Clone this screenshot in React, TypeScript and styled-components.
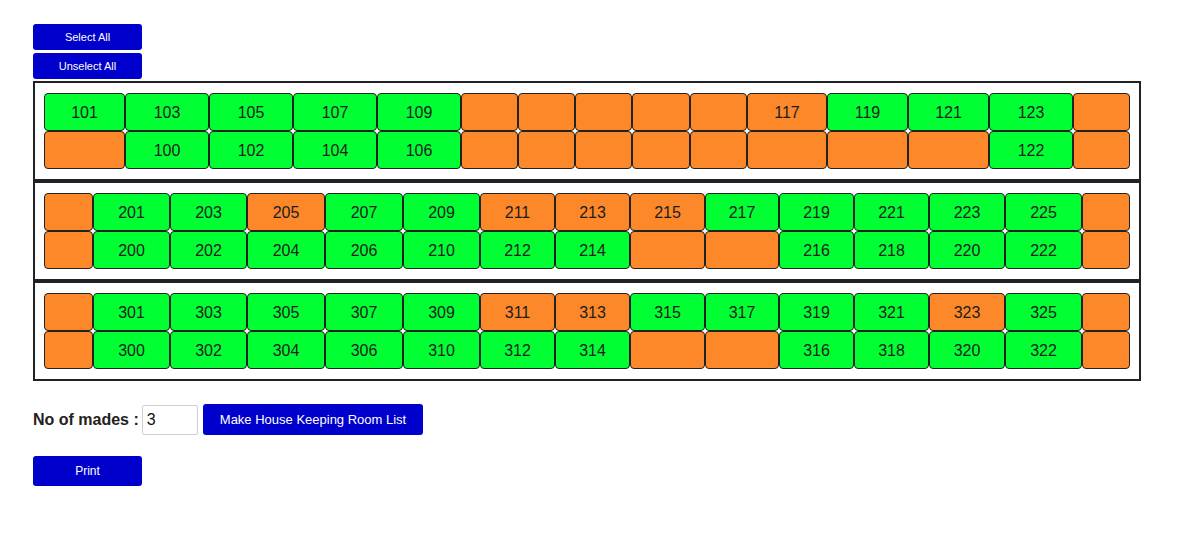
import styled, { createGlobalStyle } from 'styled-components';

const GlobalStyle = createGlobalStyle`
  body {
    margin: 8px;
    font-family: "Liberation Sans", Arial, Helvetica, sans-serif;
    color: #222;
    background: #fff;
  }
`;

const Page = styled.div`
  padding: 16px 25px;
  display: flex;
  flex-direction: column;
  align-items: flex-start;
`;

const BlueButton = styled.button<{ $wide?: boolean; $size?: number; $height?: number }>`
  width: ${(p) => (p.$wide ? 'auto' : '109px')};
  height: ${(p) => p.$height || 26}px;
  padding: ${(p) => (p.$wide ? '0 17px' : '0')};
  border: none;
  border-radius: 3px;
  background-color: #0000cd;
  color: #fff;
  font-family: "Liberation Sans", Arial, Helvetica, sans-serif;
  font-size: ${(p) => p.$size || 11}px;
  cursor: pointer;
`;

const TopButtons = styled.div`
  display: flex;
  flex-direction: column;
  gap: 3px;
  margin-bottom: 2px;
`;

const Hotel = styled.div`
  width: 1108px;
  display: flex;
  flex-direction: column;
`;

const Floor = styled.div`
  border: 2px solid #1f2226;
  padding: 10px 9px;
`;

const FloorGrid = styled.div<{ $cols: string }>`
  display: grid;
  grid-template-columns: ${(p) => p.$cols};
  grid-auto-rows: 38px;
`;

const Room = styled.div<{ $free: boolean }>`
  display: flex;
  align-items: center;
  justify-content: center;
  padding-top: 1px;
  border: 1px solid #222;
  border-radius: 4px;
  background-color: ${(p) => (p.$free ? '#00ff33' : '#fd8829')};
  font-size: 16px;
  color: #1c1c1c;
`;

const Controls = styled.div`
  display: flex;
  align-items: center;
  margin-top: 23px;
`;

const Label = styled.label`
  font-size: 16px;
  font-weight: bold;
  color: #222;
  margin-right: 3px;
`;

const MadesInput = styled.input`
  width: 56px;
  height: 30px;
  box-sizing: border-box;
  border: 1px solid #d0d0d0;
  border-radius: 2px;
  padding: 0 4px;
  font-family: "Liberation Sans", Arial, Helvetica, sans-serif;
  font-size: 16px;
  color: #111;
  margin-right: 5px;
`;

const PrintRow = styled.div`
  margin-top: 21px;
`;

type Cell = { no?: string; free: boolean };

const g = (no?: string): Cell => ({ no, free: true });
const o = (no?: string): Cell => ({ no, free: false });

const floors: { cols: number[]; rows: Cell[][] }[] = [
  {
    cols: [81, 84, 84, 84, 84, 57, 57, 57, 58, 57, 80, 81, 81, 84, 57],
    rows: [
      [g('101'), g('103'), g('105'), g('107'), g('109'), o(), o(), o(), o(), o(), o('117'), g('119'), g('121'), g('123'), o()],
      [o(), g('100'), g('102'), g('104'), g('106'), o(), o(), o(), o(), o(), o(), o(), o(), g('122'), o()],
    ],
  },
  {
    cols: [49, 77, 77, 78, 78, 77, 75, 75, 75, 74, 75, 75, 76, 77, 48],
    rows: [
      [o(), g('201'), g('203'), o('205'), g('207'), g('209'), o('211'), o('213'), o('215'), g('217'), g('219'), g('221'), g('223'), g('225'), o()],
      [o(), g('200'), g('202'), g('204'), g('206'), g('210'), g('212'), g('214'), o(), o(), g('216'), g('218'), g('220'), g('222'), o()],
    ],
  },
  {
    cols: [49, 77, 77, 78, 78, 77, 75, 75, 75, 74, 75, 75, 76, 77, 48],
    rows: [
      [o(), g('301'), g('303'), g('305'), g('307'), g('309'), o('311'), o('313'), g('315'), g('317'), g('319'), g('321'), o('323'), g('325'), o()],
      [o(), g('300'), g('302'), g('304'), g('306'), g('310'), g('312'), g('314'), o(), o(), g('316'), g('318'), g('320'), g('322'), o()],
    ],
  },
];

const App = () => {
  return (
    <Page>
      <GlobalStyle />
      <TopButtons>
        <BlueButton>Select All</BlueButton>
        <BlueButton>Unselect All</BlueButton>
      </TopButtons>

      <Hotel>
        {floors.map((floor, fi) => (
          <Floor key={fi}>
            <FloorGrid $cols={floor.cols.map((c) => `${c}fr`).join(' ')}>
              {floor.rows.flat().map((cell, ci) => (
                <Room key={ci} $free={cell.free}>
                  {cell.no}
                </Room>
              ))}
            </FloorGrid>
          </Floor>
        ))}
      </Hotel>

      <Controls>
        <Label htmlFor='mades'>No of mades :</Label>
        <MadesInput id='mades' type='number' defaultValue={3} />
        <BlueButton $wide $size={13} $height={31}>
          Make House Keeping Room List
        </BlueButton>
      </Controls>

      <PrintRow>
        <BlueButton $size={12} $height={30}>
          Print
        </BlueButton>
      </PrintRow>
    </Page>
  );
};

export default App;
